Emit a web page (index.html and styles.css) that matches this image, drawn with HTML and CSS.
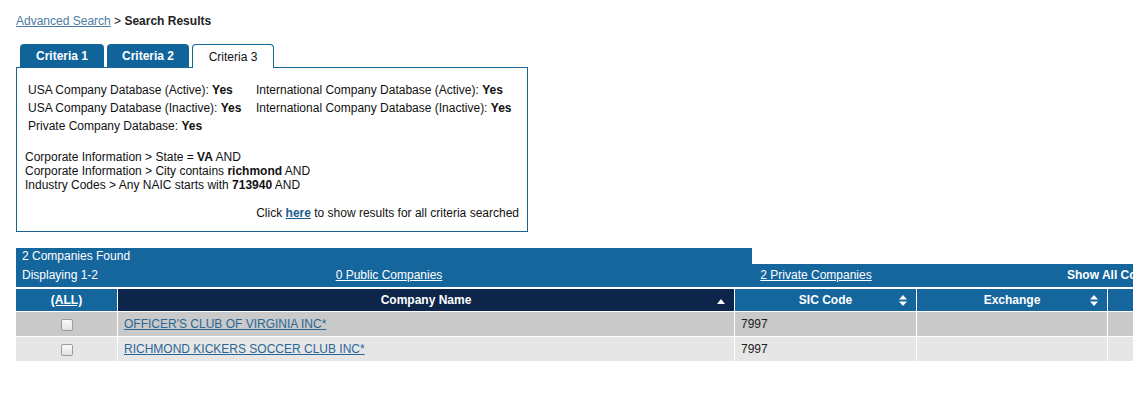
FILE: index.html
```html
<!DOCTYPE html>
<html lang="en">
<head>
    <meta charset="UTF-8">
    <title>Search Results</title>
    <link rel="stylesheet" href="styles.css">
</head>
<body>

    <!-- breadcrumb -->
    <div class="crumbs">
        <a href="#">Advanced Search</a> &gt; <b>Search Results</b>
    </div>

    <!-- criteria tabs -->
    <div class="tabs">
        <div class="tab">Criteria 1</div>
        <div class="tab">Criteria 2</div>
        <div class="tab active">Criteria 3</div>
    </div>

    <div class="criteria-box">
        <table class="db-list">
            <tr>
                <td class="db-col">USA Company Database (Active): <b>Yes</b></td>
                <td>International Company Database (Active): <b>Yes</b></td>
            </tr>
            <tr>
                <td class="db-col">USA Company Database (Inactive): <b>Yes</b></td>
                <td>International Company Database (Inactive): <b>Yes</b></td>
            </tr>
            <tr>
                <td class="db-col">Private Company Database: <b>Yes</b></td>
                <td></td>
            </tr>
        </table>

        <div class="rules">
            Corporate Information &gt; State = <b>VA</b> AND<br>
            Corporate Information &gt; City contains <b>richmond</b> AND<br>
            Industry Codes &gt; Any NAIC starts with <b>713940</b> AND
        </div>

        <div class="all-link">
            Click <a href="#"><b>here</b></a> to show results for all criteria searched
        </div>
    </div>

    <!-- results -->
    <div class="results">
        <div class="found">2 Companies Found</div>
        <div class="summary">
            <span class="cell-display">Displaying 1-2</span>
            <span class="cell-public"><a href="#">0 Public Companies</a></span>
            <span class="cell-private"><a href="#">2 Private Companies</a></span>
            <span class="cell-all"><b>Show All Companies</b></span>
        </div>

        <table class="grid">
            <tr>
                <th class="col-check"><a href="#">(ALL)</a></th>
                <th class="col-name sorted">Company Name
                    <svg class="sort" width="8" height="6" viewBox="0 0 8 6"><path d="M0 6 L4 1 L8 6 Z" fill="#fff"/></svg>
                </th>
                <th class="col-sic">SIC Code
                    <svg class="sort" width="8" height="11" viewBox="0 0 8 11"><path d="M0 4.5 L4 0 L8 4.5 Z M0 6.5 L4 11 L8 6.5 Z" fill="#fff"/></svg>
                </th>
                <th class="col-exch">Exchange
                    <svg class="sort" width="8" height="11" viewBox="0 0 8 11"><path d="M0 4.5 L4 0 L8 4.5 Z M0 6.5 L4 11 L8 6.5 Z" fill="#fff"/></svg>
                </th>
                <th class="col-more"></th>
            </tr>
            <tr class="odd">
                <td class="check"><span class="box"></span></td>
                <td><a href="#">OFFICER'S CLUB OF VIRGINIA INC*</a></td>
                <td>7997</td>
                <td></td>
                <td></td>
            </tr>
            <tr class="even">
                <td class="check"><span class="box"></span></td>
                <td><a href="#">RICHMOND KICKERS SOCCER CLUB INC*</a></td>
                <td>7997</td>
                <td></td>
                <td></td>
            </tr>
        </table>
    </div>

</body>
</html>
```

FILE: styles.css
```css
/* general */
body {
    font-family: 'Liberation Sans', Arial, sans-serif;
    font-size: 12px;
    color: #111;
    margin: 0;
    padding: 14px 16px 0 16px;
    background: #fff;
    overflow: hidden;
}

a {
    color: #1c5f8f;
}

/* breadcrumb */
.crumbs {
    line-height: 15px;
    color: #222;
}

.crumbs a {
    color: #4a7ca6;
}

/* tabs */
.tabs {
    display: flex;
    gap: 3px;
    margin-top: 15px;
    padding-left: 4px;
    height: 23px;
}

.tab {
    width: 84px;
    height: 23px;
    box-sizing: border-box;
    background: #11649a;
    color: #fff;
    font-weight: bold;
    font-size: 12px;
    text-align: center;
    line-height: 24px;
    border-radius: 4px 4px 0 0;
}

.tab + .tab {
    width: 82px;
}

.tab.active {
    background: #fff;
    color: #111;
    font-weight: normal;
    border: 1px solid #1a6494;
    border-bottom: none;
    height: 24px;
    position: relative;
    z-index: 1;
}

/* criteria box */
.criteria-box {
    width: 512px;
    height: 165px;
    box-sizing: border-box;
    border: 1px solid #1a6494;
    padding: 13px 0 0 8px;
}

.db-list {
    border-collapse: collapse;
    margin-left: 3px;
}

.db-list td {
    padding: 0;
    height: 18px;
    line-height: 18px;
    white-space: nowrap;
}

.db-list .db-col {
    width: 228px;
}

.rules {
    margin-top: 15px;
    line-height: 14px;
}

.all-link {
    margin-top: 14px;
    text-align: right;
    padding-right: 8px;
    line-height: 14px;
}

.all-link a {
    color: #1c5f8f;
}

/* results */
.results {
    margin-top: 16px;
    width: 1300px;
}

.found {
    width: 736px;
    height: 16px;
    line-height: 16px;
    background: #16669e;
    color: #fff;
    padding-left: 6px;
    box-sizing: border-box;
}

.summary {
    display: flex;
    height: 23px;
    line-height: 23px;
    background: #16669e;
    color: #fff;
    white-space: nowrap;
}

.summary a {
    color: #fff;
}

.cell-display {
    width: 274px;
    padding-left: 6px;
    box-sizing: border-box;
}

.cell-public {
    width: 198px;
    text-align: center;
}

.cell-private {
    width: 200px;
    margin-left: 228px;
    text-align: center;
}

.cell-all {
    margin-left: 151px;
}

/* grid */
.grid {
    border-collapse: collapse;
    border-top: 2px solid #fff;
    table-layout: fixed;
}

.grid th {
    background: #16669e;
    color: #fff;
    height: 22px;
    padding: 0;
    font-size: 12px;
    font-weight: bold;
    border-left: 1px solid #fff;
    position: relative;
}

.grid th:first-child {
    border-left: none;
}

.grid th a {
    color: #fff;
}

.grid th.sorted {
    background: #0c2549;
}

.sort {
    position: absolute;
    right: 9px;
    top: 6px;
}

.sorted .sort {
    top: 9px;
}

.col-check { width: 101px; }
.col-name { width: 616px; }
.col-sic { width: 181px; }
.col-exch { width: 190px; }
.col-more { width: 200px; }

.grid td {
    height: 24px;
    padding: 0 0 0 6px;
    border-left: 1px solid #fff;
    border-top: 1px solid #fff;
    color: #222;
}

.grid td:first-child {
    border-left: none;
}

.grid td a {
    color: #2a6796;
}

.grid tr.odd td {
    background: #c9c9c9;
}

.grid tr.even td {
    background: #e6e6e6;
}

.grid td.check {
    text-align: center;
    padding: 0;
}

.box {
    display: inline-block;
    width: 10px;
    height: 10px;
    border: 1px solid #9c9c9c;
    border-radius: 2px;
    background: linear-gradient(#fafafa, #e2e2e2);
    vertical-align: middle;
}
```
